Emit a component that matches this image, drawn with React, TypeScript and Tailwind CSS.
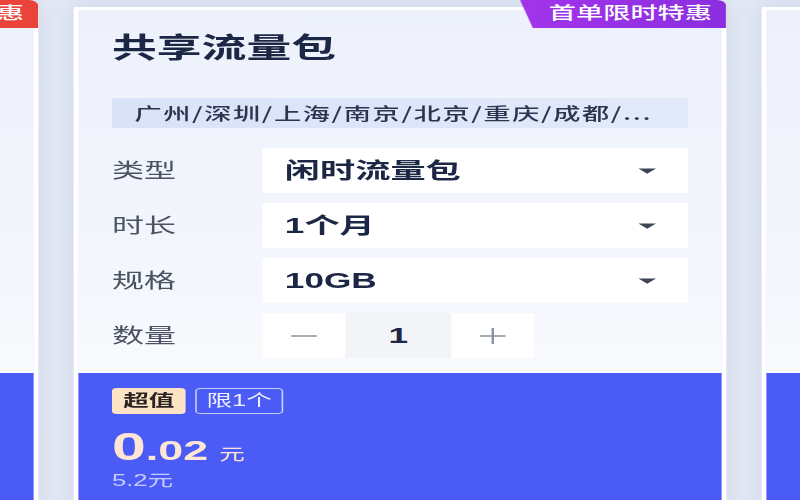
import type { ReactNode } from 'react';

const font = "font-['Liberation_Sans','Noto_Sans_CJK_SC',sans-serif]";

function Caret() {
  return (
    <svg width="11" height="6" viewBox="0 0 11 6">
      <path d="M0 0.4 L11 0.4 L5.5 5.8 Z" fill="#3d4454" />
    </svg>
  );
}

function Row({ label, children }: { label: string; children: ReactNode }) {
  return (
    <div className="flex items-center h-[45px]">
      <div className="w-[94px] text-[20px] text-[#4b5363]">{label}</div>
      {children}
    </div>
  );
}

function Select({ value }: { value: string }) {
  return (
    <div className="flex-1 h-full bg-white flex items-center justify-between pl-[14px] pr-[20px]">
      <span className="text-[22px] font-bold text-[#1c2745]">{value}</span>
      <Caret />
    </div>
  );
}

function Card({ badge, badgeBg }: { badge: string; badgeBg: string }) {
  return (
    <div className="relative w-[408px] shrink-0 mt-[7px] border-[3px] border-white bg-linear-to-b from-[#edf1fb] via-[#f3f6fc] to-white shadow-[0_0_14px_rgba(120,140,190,0.18)]">
      {/* corner badge */}
      <div
        className={`absolute -top-[10px] -right-[3px] h-[28px] pl-[18px] pr-[9px] flex items-center rounded-tr-[6px] [clip-path:polygon(0_0,100%_0,100%_100%,8px_100%)] text-[17px] font-medium text-white ${badgeBg}`}
      >
        {badge}
      </div>

      <div className="px-[21px] pt-[25px] pb-[15px]">
        <h2 className="text-[28px] leading-[28px] font-bold text-[#1c2745]">共享流量包</h2>

        <div className="mt-[35px] h-[30px] bg-linear-to-r from-[#d9e3f8] to-[#e2e9fa] px-[14px] flex items-center font-['Noto_Sans_CJK_SC',sans-serif] text-[17px] font-medium tracking-[1px] text-[#2b3550] whitespace-nowrap overflow-hidden">
          广州/深圳/上海/南京/北京/重庆/成都/...
        </div>

        <div className="mt-[20px] flex flex-col gap-[10px]">
          <Row label="类型">
            <Select value="闲时流量包" />
          </Row>
          <Row label="时长">
            <Select value="1个月" />
          </Row>
          <Row label="规格">
            <Select value="10GB" />
          </Row>
          <Row label="数量">
            <div className="flex h-full">
              <div className="w-[52px] bg-white flex items-center justify-center">
                <svg width="18" height="18" viewBox="0 0 18 18">
                  <path d="M1 9 H17" stroke="#8b93a1" strokeWidth="1.5" />
                </svg>
              </div>
              <div className="w-[66px] bg-[#f2f4f8] flex items-center justify-center text-[22px] font-bold text-[#1c2745]">
                1
              </div>
              <div className="w-[52px] bg-white flex items-center justify-center">
                <svg width="18" height="18" viewBox="0 0 18 18">
                  <path d="M1 9 H17 M9 1 V17" stroke="#8b93a1" strokeWidth="1.5" />
                </svg>
              </div>
            </div>
          </Row>
        </div>
      </div>

      {/* price area */}
      <div className="h-[140px] bg-[#4a5bf6] px-[21px] pt-[15px]">
        <div className="flex gap-[6px]">
          <span className="h-[26px] px-[7px] flex items-center rounded-[3px] bg-[#fde3c6] text-[16px] font-bold text-[#2a2522]">
            超值
          </span>
          <span className="h-[26px] px-[6px] flex items-center rounded-[3px] border border-[#c9cffd] text-[16px] text-[#eef0ff]">
            限1个
          </span>
        </div>
        <div className="mt-[14px] flex items-baseline leading-none text-[#fde6d3]">
          <span className="text-[38px] font-bold">0</span>
          <span className="text-[28px] font-bold">.02</span>
          <span className="ml-[7px] text-[16px]">元</span>
        </div>
        <div className="mt-[7px] text-[16px] leading-none text-[#c7cdff]">5.2元</div>
      </div>
    </div>
  );
}

export default function App() {
  return (
    <div className={`w-[800px] h-[500px] overflow-hidden bg-[#e1e7f3] ${font}`}>
      {/* screenshot is horizontally stretched; lay out at 500px and scale */}
      <div className="w-[500px] origin-top-left scale-x-[1.6] flex justify-center items-start gap-[22px]">
        <Card badge="新人限时特惠" badgeBg="bg-[#e9433b]" />
        <Card badge="首单限时特惠" badgeBg="bg-linear-to-r from-[#a234ea] to-[#8b2ee0]" />
        <Card badge="限时特惠" badgeBg="bg-[#e9433b]" />
      </div>
    </div>
  );
}
